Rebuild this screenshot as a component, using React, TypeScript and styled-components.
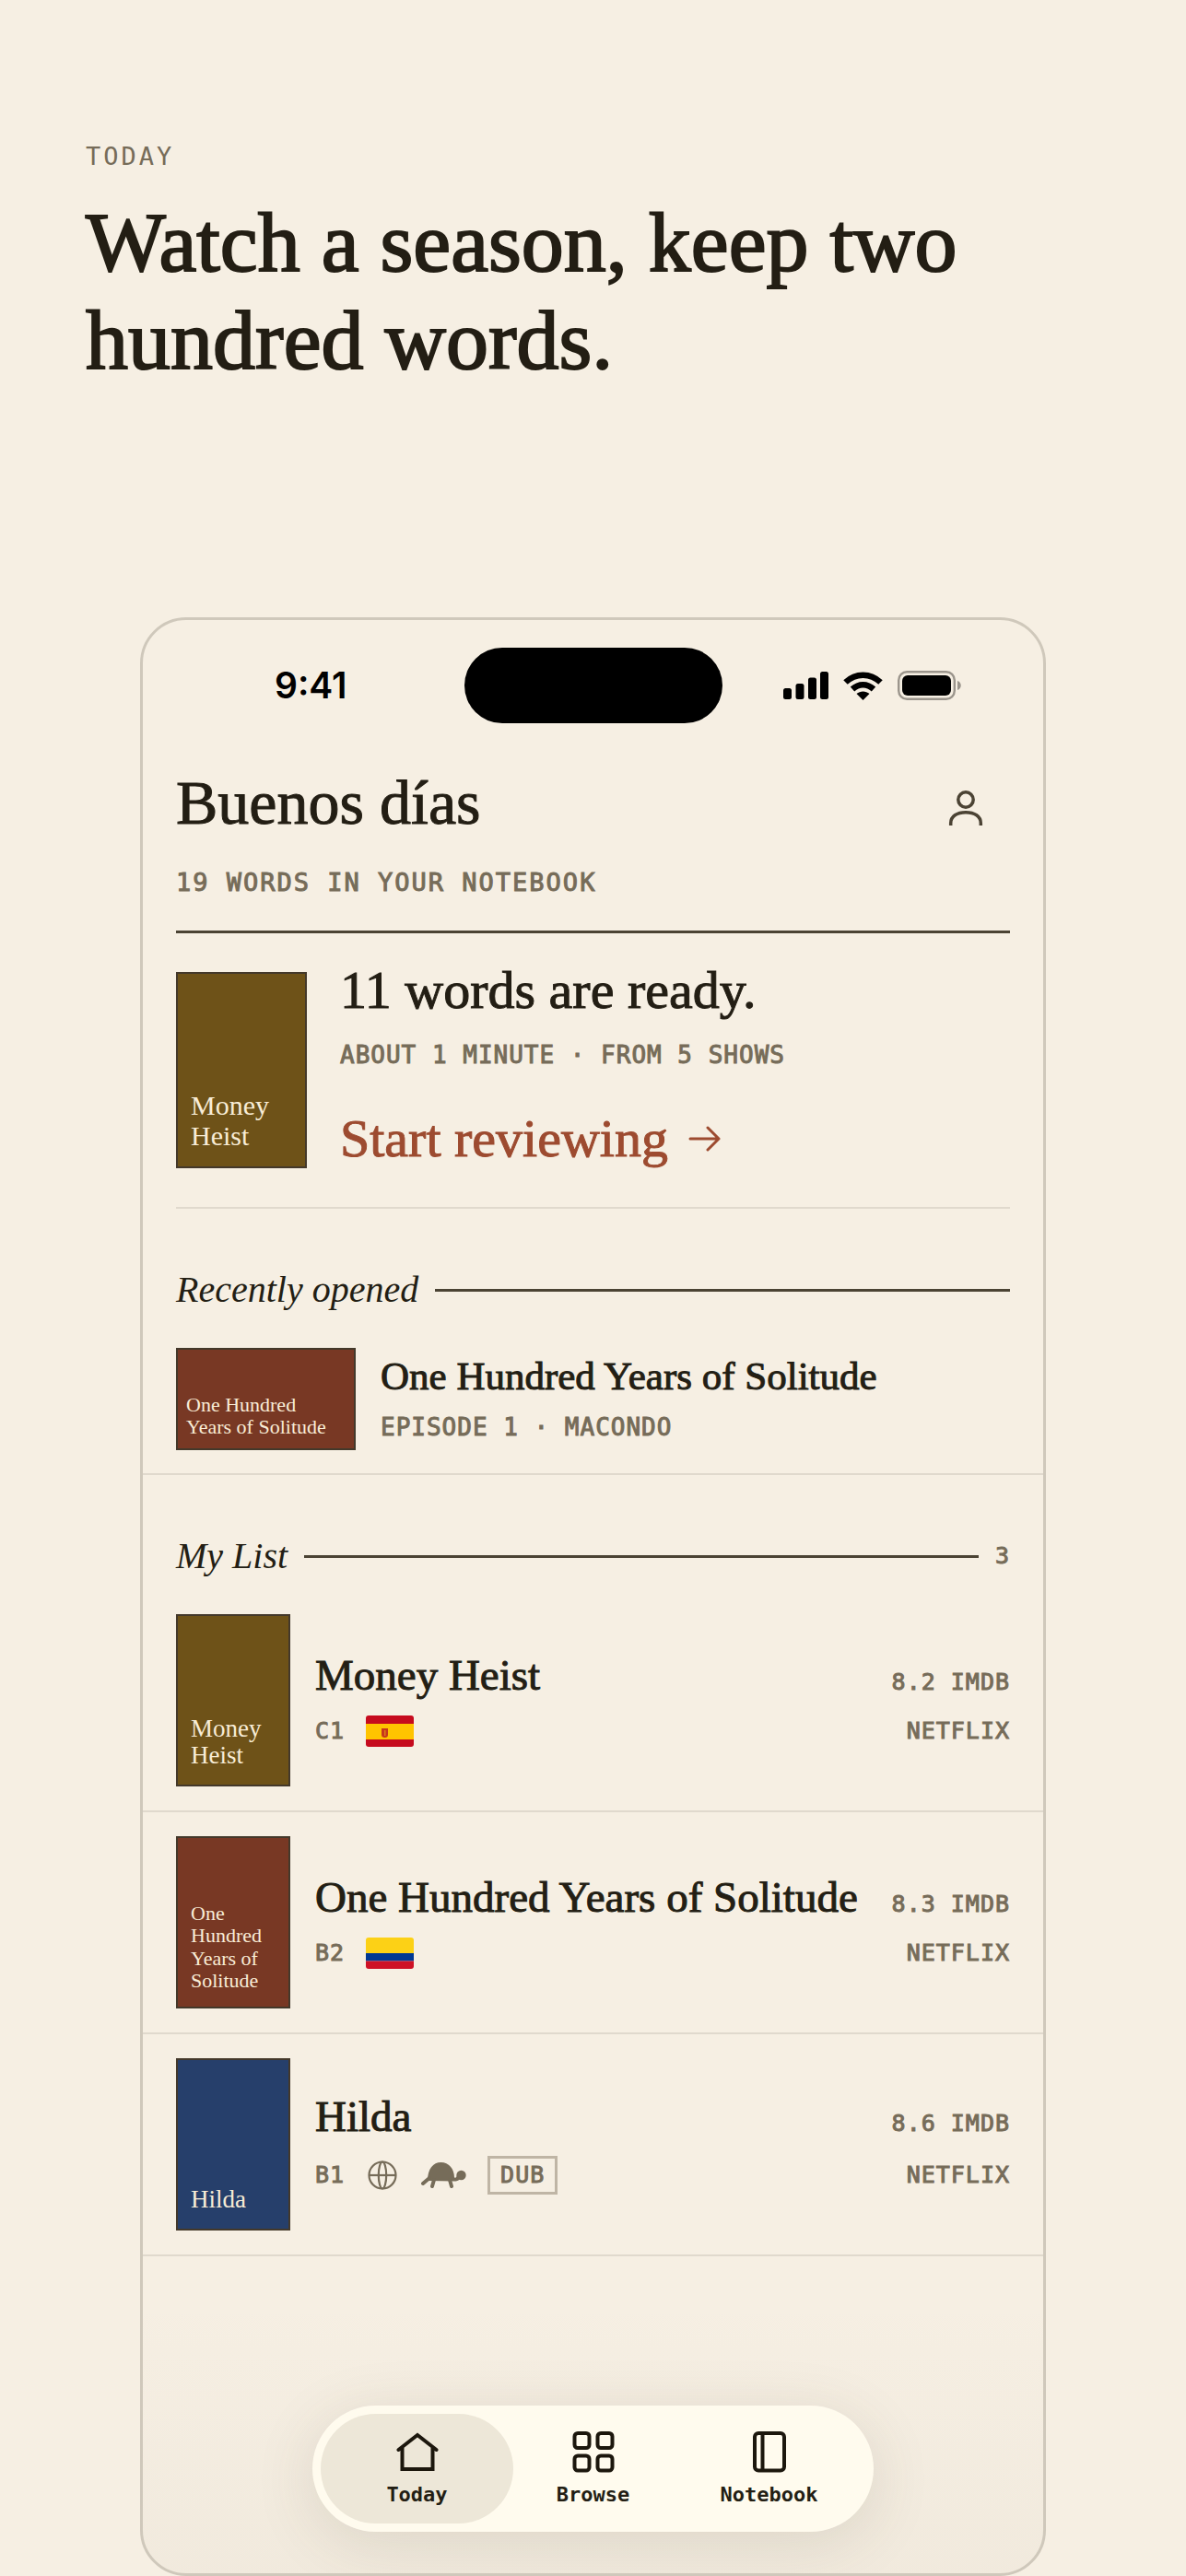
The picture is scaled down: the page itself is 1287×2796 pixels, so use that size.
import React from "react";
import styled, { createGlobalStyle } from "styled-components";

const serif = `"Liberation Serif", "Times New Roman", serif`;
const mono = `"DejaVu Sans Mono", "Liberation Mono", monospace`;
const paper = "#f6efe3";
const ink = "#231e14";
const muted = "#766c59";
const rule = "#4b4334";
const hairline = "#e0d9cd";
const accent = "#9d4b30";

const GlobalStyle = createGlobalStyle`
  * { box-sizing: border-box; }
  body { margin: 0; background: ${paper}; color: ${ink}; font-family: ${serif}; }
  h1, h2, h3, p, ul { margin: 0; padding: 0; font-weight: 400; }
  ul { list-style: none; }
  a { color: inherit; text-decoration: none; }
  button { border: 0; padding: 0; background: none; color: inherit; cursor: pointer; }
  svg { display: block; flex: none; }
`;

const Page = styled.main`
  padding: 154px 24px 0;
`;

const Intro = styled.header`
  padding: 0 69px;
`;

const Eyebrow = styled.p`
  font: 400 27px/32px ${mono};
  letter-spacing: 3px;
  color: ${muted};
`;

const Headline = styled.h1`
  max-width: 1000px;
  margin-top: 24px;
  font-size: 92px;
  line-height: 106px;
  -webkit-text-stroke: 2px ${ink};
`;

const Phone = styled.section`
  display: flex;
  flex-direction: column;
  max-width: 983px;
  margin: 248px auto 0;
  border: 3px solid #cfc8bb;
  border-radius: 50px;
  background: linear-gradient(to bottom, rgba(120, 105, 80, 0) 86%, rgba(120, 105, 80, 0.04)), ${paper};
  overflow: hidden;
`;

const StatusBar = styled.div`
  display: grid;
  grid-template-columns: 1fr 280px 1fr;
  align-items: center;
  padding: 30px 36px 0;
`;

const Clock = styled.span`
  justify-self: center;
  padding-right: 20px;
  font: 600 39px/48px Inter, "Liberation Sans", sans-serif;
  color: #000;
`;

const Island = styled.div`
  height: 82px;
  border-radius: 41px;
  background: #000;
`;

const StatusIcons = styled.div`
  display: flex;
  justify-content: center;
  align-items: center;
  gap: 16px;
  padding-left: 14px;
`;

const TopBar = styled.header`
  margin: 0 36px;
  padding: 44px 0 34px;
  border-bottom: 3px solid ${rule};
`;

const GreetingRow = styled.div`
  display: flex;
  justify-content: space-between;
  align-items: center;
`;

const Greeting = styled.h2`
  font-size: 68px;
  line-height: 84px;
  -webkit-text-stroke: 1px ${ink};
`;

const ProfileButton = styled.button`
  display: grid;
  place-items: end center;
  width: 96px;
  height: 84px;
  && { padding-bottom: 16px; }
`;

const Caption = styled.p<{ $wide?: boolean }>`
  font: 400 ${(p) => (p.$wide ? 27 : 26)}px/36px ${mono};
  letter-spacing: ${(p) => (p.$wide ? 2 : 1)}px;
  text-transform: uppercase;
  color: ${muted};
  -webkit-text-stroke: 1px ${muted};
`;

const TopCaption = styled(Caption)`
  margin-top: 27px;
`;

const Cover = styled.div<{ $tone: string; $w: number; $h: number; $size: number; $pad: string }>`
  display: flex;
  align-items: flex-end;
  flex: none;
  width: ${(p) => p.$w}px;
  height: ${(p) => p.$h}px;
  padding: ${(p) => p.$pad};
  border: 2px solid #43382a;
  background: ${(p) => p.$tone};
  color: #f8ecd6;
  font-size: ${(p) => p.$size}px;
  line-height: 1.1;
`;

const Review = styled.section`
  display: flex;
  gap: 36px;
  margin: 0 36px;
  padding: 42px 0;
  border-bottom: 2px solid ${hairline};
`;

const ReviewBody = styled.div`
  display: flex;
  flex-direction: column;
  align-items: flex-start;
  justify-content: space-between;
`;

const ReviewTitle = styled.h2`
  margin: -12px 0 20px;
  font-size: 58px;
  line-height: 64px;
  -webkit-text-stroke: 1px ${ink};
`;

const StartLink = styled.a`
  && { color: ${accent}; }
  display: flex;
  align-items: center;
  gap: 22px;
  font-size: 58px;
  line-height: 64px;
  -webkit-text-stroke: 1px ${accent};
`;

const SectionHead = styled.div`
  display: flex;
  align-items: center;
  gap: 18px;
  padding: 61px 36px 36px;
`;

const SectionTitle = styled.h2`
  font-size: 40px;
  font-style: italic;
  line-height: 54px;
`;

const Line = styled.hr`
  flex: 1;
  height: 3px;
  margin: 0;
  border: 0;
  background: ${rule};
`;

const Entry = styled.a`
  display: flex;
  align-items: center;
  gap: 27px;
  padding: 0 36px 25px;
  border-bottom: 2px solid ${hairline};
`;

const EntryBody = styled.div`
  display: flex;
  flex-direction: column;
  gap: 9px;
  padding-bottom: 4px;
`;

const EntryTitle = styled.h3`
  font-size: 43px;
  line-height: 56px;
  -webkit-text-stroke: 1px ${ink};
`;

const ShowRow = styled.a<{ $first?: boolean }>`
  display: flex;
  align-items: center;
  gap: 27px;
  padding: ${(p) => (p.$first ? 0 : 26)}px 36px 26px;
  border-bottom: 2px solid ${hairline};
`;

const ShowBody = styled.div`
  display: flex;
  flex: 1;
  flex-direction: column;
  gap: 15px;
  padding-bottom: 4px;
`;

const ShowLine = styled.div`
  display: flex;
  justify-content: space-between;
  align-items: baseline;
`;

const MetaLine = styled(ShowLine)`
  align-items: center;
`;

const ShowTitle = styled.h3`
  font-size: 47px;
  line-height: 56px;
  white-space: nowrap;
  -webkit-text-stroke: 1px ${ink};
`;

const Tags = styled.div`
  display: flex;
  align-items: center;
  gap: 23px;
`;

const Meta = styled.span`
  font: 400 25px/36px ${mono};
  letter-spacing: 1px;
  white-space: nowrap;
  color: ${muted};
  -webkit-text-stroke: 1px ${muted};
`;

const Badge = styled(Meta)`
  padding: 0 11px;
  border: 3px solid #bfb5a5;
`;

const TabBar = styled.nav`
  display: grid;
  grid-template-columns: repeat(3, 1fr);
  width: 609px;
  max-width: 100%;
  margin: 162px auto 45px;
  padding: 9px;
  border-radius: 69px;
  background: #fffbee;
  box-shadow: 0 12px 66px rgba(80, 70, 50, 0.13);
`;

const Tab = styled.button<{ $active?: boolean }>`
  display: flex;
  flex-direction: column;
  align-items: center;
  justify-content: center;
  gap: 10px;
  height: 119px;
  margin: 0 -6px;
  border-radius: 60px;
  font: 700 22px/28px ${mono};
  background: ${(p) => (p.$active ? "#ede7d8" : "transparent")};

  &:first-child { margin-left: 0; margin-right: -12px; }
  &:last-child { margin-right: 0; margin-left: -12px; }
`;

const Signal = () => (
  <svg width="49" height="30" viewBox="0 0 49 30">
    <rect x="0" y="18" width="9" height="12" rx="2.5" />
    <rect x="13.5" y="13" width="9" height="17" rx="2.5" />
    <rect x="27" y="6.5" width="9" height="23.5" rx="2.5" />
    <rect x="40" y="0" width="9" height="30" rx="2.5" />
  </svg>
);

const Wifi = () => (
  <svg width="43" height="31" viewBox="0 0 43 31" fill="none" stroke="#000" strokeWidth="6.5">
    <path d="M2.5 11.5C13.5 1 29.5 1 40.5 11.5" />
    <path d="M10 19C17 12.5 26 12.5 33 19" />
    <path d="M21.5 31L14.5 24C18.5 20.5 24.5 20.5 28.5 24Z" fill="#000" stroke="none" />
  </svg>
);

const Battery = () => (
  <svg width="70" height="32" viewBox="0 0 70 32">
    <rect x="1.2" y="1.2" width="60.6" height="29.6" rx="9" fill="none" stroke="#9b958c" strokeWidth="2.4" />
    <rect x="5" y="5" width="53" height="22" rx="6" />
    <path d="M65 11C70 12.5 70 19.5 65 21Z" fill="#9b958c" />
  </svg>
);

const Person = () => (
  <svg width="38" height="40" viewBox="0 0 38 40" fill="none" stroke="#4b4334" strokeWidth="3.5">
    <circle cx="19" cy="11" r="8.2" />
    <path d="M2.7 39V36.5C2.7 29 9.5 24.7 19 24.7S35.3 29 35.3 36.5V39" />
  </svg>
);

const Arrow = () => (
  <svg width="36" height="28" viewBox="0 0 36 28" fill="none" stroke={accent} strokeWidth="3" strokeLinecap="round" strokeLinejoin="round">
    <path d="M2 14H33M21 2L33 14L21 26" />
  </svg>
);

const Spain = () => (
  <svg width="52" height="34" viewBox="0 0 52 34" role="img" aria-label="Spain">
    <clipPath id="es"><rect width="52" height="34" rx="3" /></clipPath>
    <g clipPath="url(#es)">
      <path fill="#c60b1e" d="M0 0H52V34H0Z" />
      <path fill="#ffc400" d="M0 9H52V26H0Z" />
      <path fill="#c7361c" d="M17 14H24V21Q24 24 20.5 24T17 21Z" />
      <path fill="#e07a14" d="M20 16H21.5V22H20Z" />
    </g>
  </svg>
);

const Colombia = () => (
  <svg width="52" height="34" viewBox="0 0 52 34" role="img" aria-label="Colombia">
    <clipPath id="co"><rect width="52" height="34" rx="3" /></clipPath>
    <g clipPath="url(#co)">
      <path fill="#fcd116" d="M0 0H52V17H0Z" />
      <path fill="#003893" d="M0 17H52V25.5H0Z" />
      <path fill="#ce1126" d="M0 25.5H52V34H0Z" />
    </g>
  </svg>
);

const Globe = () => (
  <svg width="36" height="32" viewBox="-2 0 36 32" fill="none" stroke={muted} strokeWidth="2.2">
    <circle cx="16" cy="16" r="14.5" />
    <ellipse cx="16" cy="16" rx="4.2" ry="14.5" />
    <path d="M1.5 16H30.5" />
  </svg>
);

const Turtle = () => (
  <svg width="50" height="28" viewBox="-1 0 50 28" fill={muted}>
    <path d="M7 20C7 7 13 0 21.5 0S36 7 36 16.5C38 17 38.5 16 39 14H42V18C41 20 38 20.5 36 20.5Z" />
    <circle cx="43.5" cy="14" r="5.2" />
    <path d="M9 17L2 23M14 19L12 26M31 19L33 26" stroke={muted} strokeWidth="4" strokeLinecap="round" />
  </svg>
);

const Home = () => (
  <svg width="46" height="46" viewBox="0 0 46 46" fill="none" stroke="#1c170d" strokeWidth="4" strokeLinecap="round">
    <path d="M2.5 21L23 5L43.5 21M6.5 18.5V42H39.5V18.5" />
  </svg>
);

const Grid = () => (
  <svg width="46" height="46" viewBox="0 0 46 46" fill="none" stroke="#1c170d" strokeWidth="4">
    <rect x="2.5" y="3" width="16" height="16" rx="3.5" />
    <rect x="27.5" y="3" width="16" height="16" rx="3.5" />
    <rect x="2.5" y="27.5" width="16" height="16" rx="3.5" />
    <rect x="27.5" y="27.5" width="16" height="16" rx="3.5" />
  </svg>
);

const Book = () => (
  <svg width="46" height="46" viewBox="0 0 46 46" fill="none" stroke="#1c170d" strokeWidth="4">
    <rect x="7" y="3" width="32" height="40.5" rx="4" />
    <path d="M15.5 3V43" />
  </svg>
);

const shows = [
  { title: "Money Heist", tone: "#6e5218", level: "C1", score: "8.2", size: 27, tags: <Spain /> },
  { title: "One Hundred Years of Solitude", tone: "#783824", level: "B2", score: "8.3", size: 22, tags: <Colombia /> },
  {
    title: "Hilda",
    tone: "#263f6b",
    level: "B1",
    score: "8.6",
    size: 27,
    tags: (
      <>
        <Globe />
        <Turtle />
        <Badge>DUB</Badge>
      </>
    ),
  },
];

const tabs = [
  { label: "Today", icon: <Home /> },
  { label: "Browse", icon: <Grid /> },
  { label: "Notebook", icon: <Book /> },
];

export default function App() {
  return (
    <>
      <GlobalStyle />
      <Page>
        <Intro>
          <Eyebrow>TODAY</Eyebrow>
          <Headline>Watch a season, keep two hundred words.</Headline>
        </Intro>
        <Phone>
          <StatusBar>
            <Clock>9:41</Clock>
            <Island />
            <StatusIcons>
              <Signal />
              <Wifi />
              <Battery />
            </StatusIcons>
          </StatusBar>
          <TopBar>
            <GreetingRow>
              <Greeting>Buenos días</Greeting>
              <ProfileButton type="button" aria-label="Profile"><Person /></ProfileButton>
            </GreetingRow>
            <TopCaption $wide>19 words in your notebook</TopCaption>
          </TopBar>
          <Review>
            <Cover $tone="#6e5218" $w={142} $h={213} $size={30} $pad="14px 14px 17px">Money Heist</Cover>
            <ReviewBody>
              <div>
                <ReviewTitle>11 words are ready.</ReviewTitle>
                <Caption>About 1 minute · from 5 shows</Caption>
              </div>
              <StartLink href="#review">Start reviewing <Arrow /></StartLink>
            </ReviewBody>
          </Review>
          <section>
            <SectionHead>
              <SectionTitle>Recently opened</SectionTitle>
              <Line />
            </SectionHead>
            <Entry href="#episode">
              <Cover $tone="#783824" $w={195} $h={111} $size={22} $pad="9px 16px 11px 9px">
                One Hundred<br />Years of Solitude
              </Cover>
              <EntryBody>
                <EntryTitle>One Hundred Years of Solitude</EntryTitle>
                <Caption>Episode 1 · Macondo</Caption>
              </EntryBody>
            </Entry>
          </section>
          <section>
            <SectionHead>
              <SectionTitle>My List</SectionTitle>
              <Line />
              <Meta>3</Meta>
            </SectionHead>
            <ul>
              {shows.map((s, i) => (
                <li key={s.title}>
                  <ShowRow href="#show" $first={i === 0}>
                    <Cover $tone={s.tone} $w={124} $h={187} $size={s.size} $pad="14px 14px 16px">{s.title}</Cover>
                    <ShowBody>
                      <ShowLine>
                        <ShowTitle>{s.title}</ShowTitle>
                        <Meta>{s.score} IMDB</Meta>
                      </ShowLine>
                      <MetaLine>
                        <Tags>
                          <Meta>{s.level}</Meta>
                          {s.tags}
                        </Tags>
                        <Meta>NETFLIX</Meta>
                      </MetaLine>
                    </ShowBody>
                  </ShowRow>
                </li>
              ))}
            </ul>
          </section>
          <TabBar>
            {tabs.map((t, i) => (
              <Tab key={t.label} type="button" $active={i === 0}>
                {t.icon}
                {t.label}
              </Tab>
            ))}
          </TabBar>
        </Phone>
      </Page>
    </>
  );
}
